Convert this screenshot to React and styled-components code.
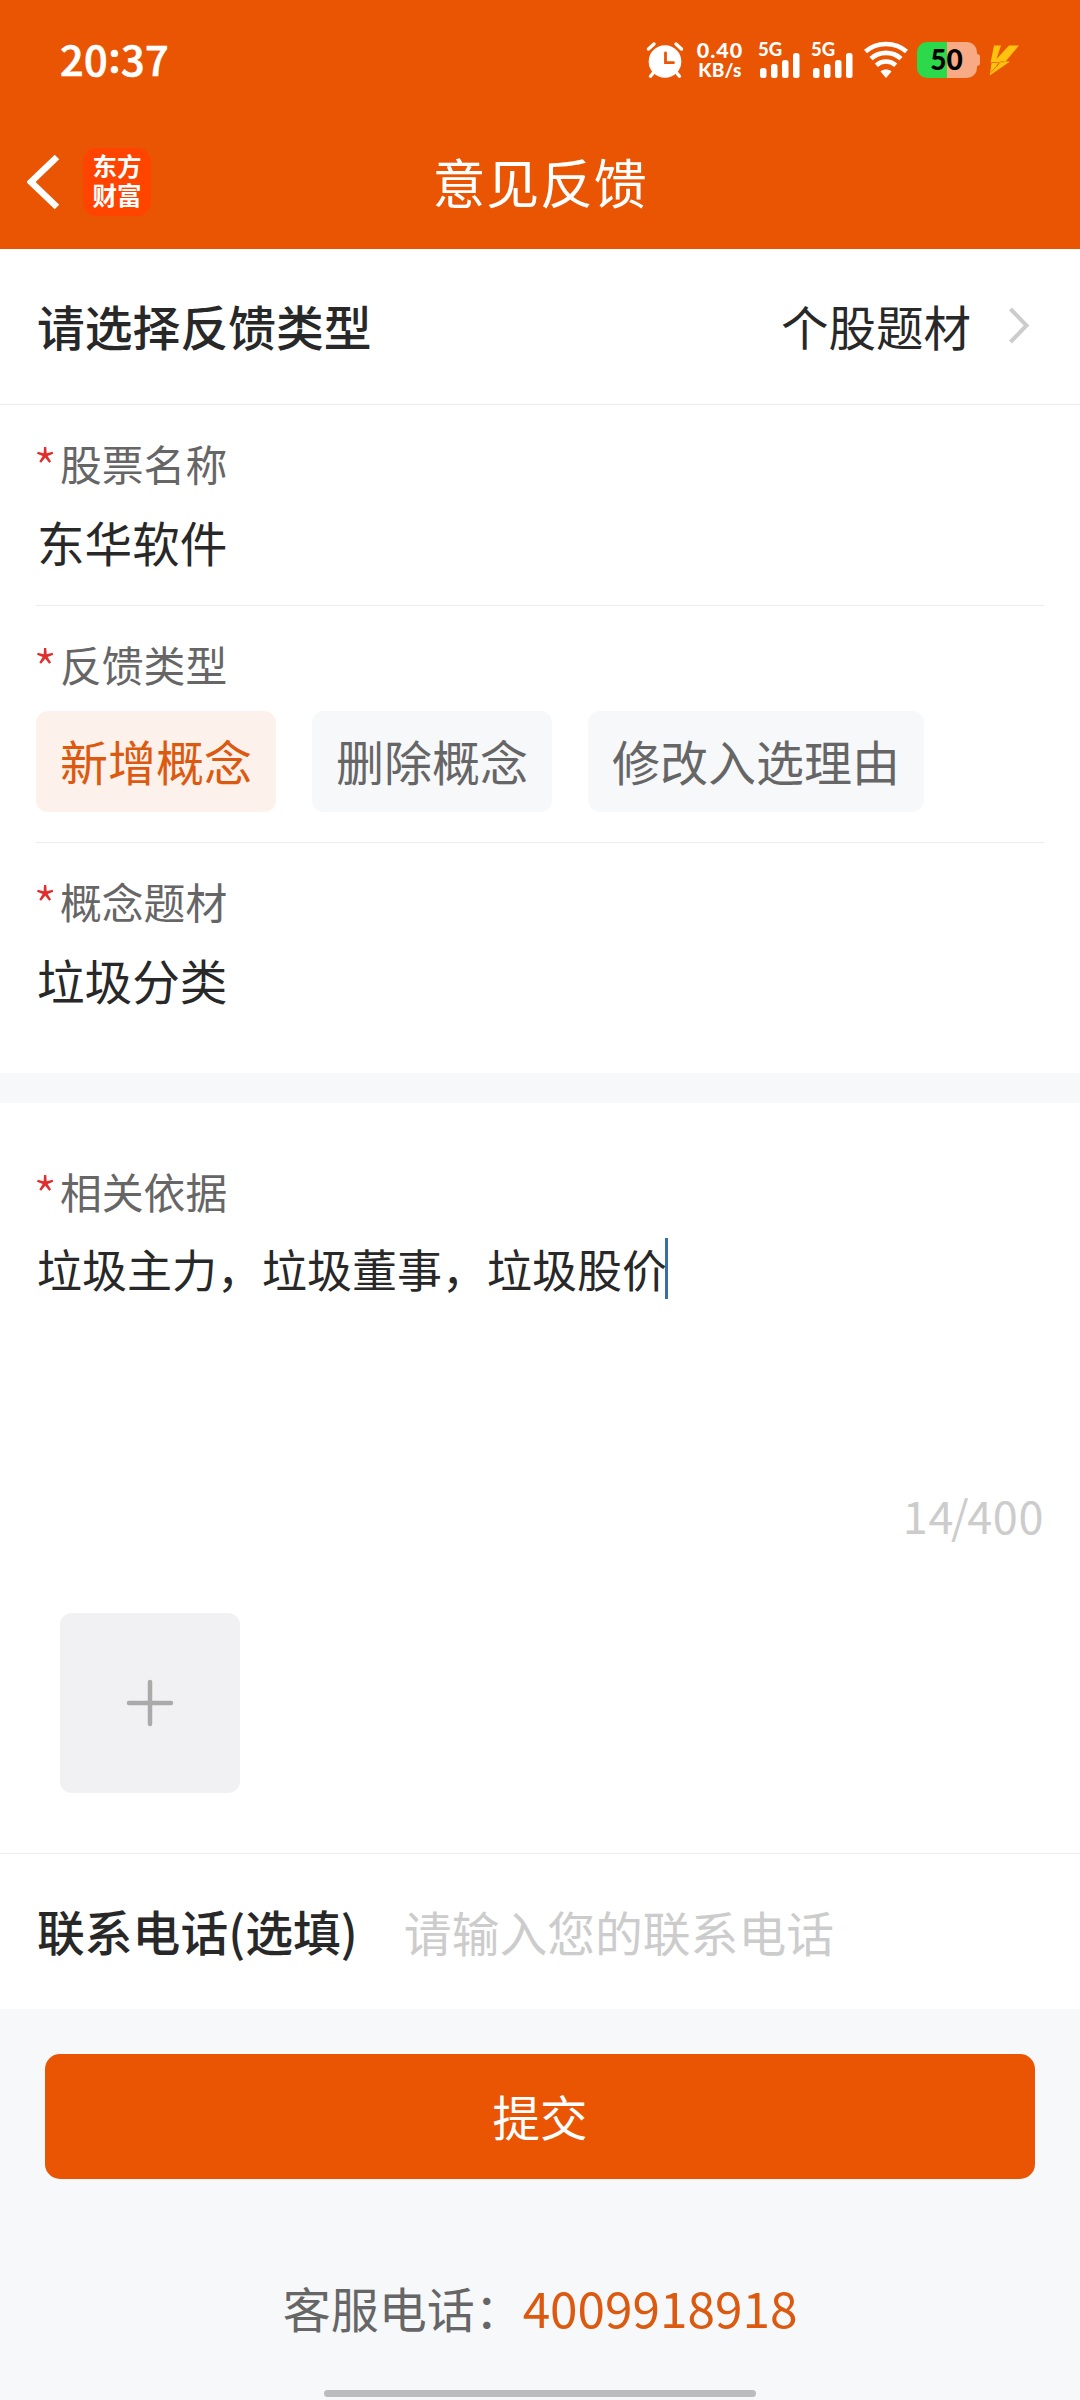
import React, { useState } from "react";
import styled, { createGlobalStyle } from "styled-components";

const GlobalStyle = createGlobalStyle`
  * {
    box-sizing: border-box;
  }

  body {
    margin: 0;
    background-color: #f7f8fa;
    font-family: "Noto Sans CJK SC", "Noto Sans", sans-serif;
    color: #282828;
  }

  button {
    font-family: inherit;
    border: none;
    padding: 0;
  }
`;

const Page = styled.div`
  width: 1080px;
  height: 2400px;
  display: flex;
  flex-direction: column;
  overflow: hidden;
  background-color: #f7f8fa;
`;

const StatusBar = styled.div`
  height: 120px;
  padding: 0 60px;
  display: flex;
  align-items: center;
  justify-content: space-between;
  background-color: #ea5504;
  color: #fff;
`;

const Clock = styled.span`
  font-size: 41.5px;
  font-weight: 500;
  letter-spacing: 0.4px;
  line-height: 60px;
  padding-bottom: 5px;
  -webkit-text-stroke: 0.7px #fff;
`;

const Colon = styled.span`
  vertical-align: 4px;
  line-height: 1;
`;

const StatusIcons = styled.div`
  display: flex;
  align-items: center;
  font-family: Lato, "Noto Sans", sans-serif;

  svg {
    display: block;
    overflow: visible;
  }
`;

const Spacer = styled.span`
  width: ${(props) => props.$width}px;
`;

const NetSpeed = styled.div`
  width: 48px;
  height: 40px;
  margin: 0 14px 0 12px;
  display: flex;
  flex-direction: column;
  align-items: center;
  font-weight: 900;
  white-space: nowrap;
`;

const SpeedLine = styled.span`
  font-size: ${(props) => props.$size}px;
  line-height: 20px;
  letter-spacing: ${(props) => props.$spacing}px;
`;

const NavBar = styled.header`
  height: 129px;
  display: grid;
  grid-template-columns: 1fr auto 1fr;
  align-items: center;
  padding: 0 27px;
  background-color: #ea5504;
  color: #fff;
`;

const NavLeft = styled.div`
  display: flex;
  align-items: center;
  gap: 23px;
  padding-bottom: 6px;
`;

const Logo = styled.div`
  width: 68px;
  height: 68px;
  padding-top: 3px;
  border-radius: 14px;
  background-color: #ff4400;
  font-size: 24.5px;
  font-weight: 700;
  line-height: 29.5px;
  text-align: center;
`;

const Title = styled.h1`
  margin: 0;
  font-size: 53px;
  font-weight: 400;
  line-height: 80px;
  letter-spacing: 0.8px;
  padding-bottom: 8px;
`;

const TypeRow = styled.div`
  height: 156px;
  padding: 0 50px 1px 37px;
  display: flex;
  align-items: center;
  background-color: #fff;
  border-bottom: 1px solid #ececec;
`;

const RowTitle = styled.span`
  font-size: 47.8px;
  font-weight: 500;
  line-height: 72px;
`;

const TypeValue = styled.span`
  margin-left: auto;
  margin-right: 37px;
  font-size: 47.5px;
  line-height: 72px;
`;

const Panel = styled.section`
  padding: 0 36px;
  background-color: #fff;
`;

const Field = styled.div`
  height: ${(props) => props.$height}px;
  padding-top: 28px;
  border-bottom: ${(props) => (props.$last ? "none" : "1px solid #ececec")};
`;

const Label = styled.div`
  height: 60px;
  display: flex;
  font-size: 41.8px;
  line-height: 60px;
  color: #666;
`;

const Star = styled.span`
  width: 27px;
  margin-left: -3px;
  font-size: 55px;
  font-weight: 300;
  line-height: 66px;
  color: #e02d2d;
`;

const Value = styled.div`
  margin-top: 19px;
  padding-left: 1px;
  font-size: 47.6px;
  line-height: 60px;
`;

const ChipRow = styled.div`
  display: flex;
  gap: 36px;
  margin-top: 17px;
`;

const Chip = styled.button`
  height: 101px;
  padding: 0 24px 3px;
  border-radius: 12px;
  font-size: 48px;
  line-height: 94px;
  color: ${(props) => (props.$active ? "#dc5a10" : "#666")};
  background-color: ${(props) => (props.$active ? "#fdf1eb" : "#f7f8fa")};
`;

const Evidence = styled.section`
  height: 751px;
  margin-top: 30px;
  padding: 58px 36px 0;
  background-color: #fff;
  border-bottom: 1px solid #ececec;
`;

const EvidenceText = styled.div`
  height: 246px;
  margin-top: 15px;
  padding-left: 1px;
  display: flex;
  align-items: flex-start;
  font-size: 45px;
  line-height: 66px;
`;

const Caret = styled.span`
  width: 3px;
  height: 61px;
  margin: 2px 0 0 -2px;
  background-color: #3a6fa5;
`;

const Counter = styled.div`
  text-align: right;
  font-size: 45px;
  line-height: 66px;
  letter-spacing: 0.6px;
  color: #ccc;
`;

const Slash = styled.span`
  margin: 0 -2px 0 -3px;
`;

const Upload = styled.button`
  width: 180px;
  height: 180px;
  margin: 65px 0 0 24px;
  display: flex;
  align-items: center;
  justify-content: center;
  border-radius: 12px;
  background-color: #f1f1f4;
`;

const PhoneRow = styled.div`
  height: 155px;
  padding: 0 36px 1px 37px;
  display: flex;
  align-items: center;
  background-color: #fff;
`;

const PhoneInput = styled.input`
  flex: 1;
  height: 72px;
  margin-left: 46px;
  padding: 0;
  border: none;
  outline: none;
  background: transparent;
  font-family: inherit;
  font-size: 47.8px;

  &::placeholder {
    color: #ccc;
  }
`;

const Submit = styled.button`
  height: 125px;
  margin: 45px 45px 0;
  padding-bottom: 2px;
  border-radius: 15px;
  background-color: #ea5504;
  color: #fff;
  font-size: 47.5px;
  line-height: 119px;
`;

const Service = styled.div`
  margin-top: 95px;
  display: flex;
  justify-content: center;
  font-size: 48px;
  line-height: 66px;
  color: #666;
`;

const ServiceNumber = styled.span`
  font-size: 49.5px;
  color: #dc5a10;
`;

const HomeBar = styled.div`
  width: 432px;
  height: 7px;
  margin: auto auto 3px;
  border-radius: 4px;
  background-color: #bbbcbe;
`;

const AlarmIcon = () => (
  <svg width="38" height="36" viewBox="0 0 38 36">
    <circle cx="19" cy="19.5" r="16.3" fill="#fff" />
    <g stroke="#fff" strokeWidth="3.4" strokeLinecap="round">
      <path d="M2.5 7 8 2M30 2l5.5 5M8 30l-3.5 4.3M30 30l3.5 4.3" />
    </g>
    <path d="M19.5 11v9.7h8" fill="none" stroke="#ea5504" strokeWidth="2.8" strokeLinecap="round" />
  </svg>
);

const SignalIcon = () => (
  <svg width="43" height="36" viewBox="0 0 43 36">
    <text x="0" y="14" fill="#fff" fontSize="18.5" fontWeight="900">5G</text>
    <g fill="#fff">
      <rect x="2" y="26" width="6.5" height="10" rx="2.5" />
      <rect x="13" y="22" width="6.5" height="14" rx="2.5" />
      <rect x="24" y="18" width="6.5" height="18" rx="2.5" />
      <rect x="35" y="11" width="6.5" height="25" rx="2.5" />
    </g>
  </svg>
);

const WifiIcon = () => (
  <svg width="44" height="36" viewBox="0 0 44 36">
    <g fill="none" stroke="#fff" strokeWidth="4.6">
      <path d="M1.5 9.5C13-.5 31-.5 42.5 9.5" />
      <path d="M7 16.6c8.5-7.6 21.5-7.6 30 0" />
      <path d="M12.3 23.2c5.6-5 13.8-5 19.4 0" />
    </g>
    <path d="M16.5 29.5c3-2.6 8-2.6 11 0L22 36z" fill="#fff" />
  </svg>
);

const BatteryIcon = () => (
  <svg width="64" height="36" viewBox="0 0 64 36">
    <path d="M10 0h20v36H10A10 10 0 0 1 0 26V10A10 10 0 0 1 10 0z" fill="#2bd94b" />
    <path d="M30 0h20a10 10 0 0 1 10 10v2q3 0 3 3v6q0 3-3 3v2a10 10 0 0 1-10 10H30z" fill="#f7aa84" />
    <text x="29.5" y="28" textAnchor="middle" fontSize="28" fontWeight="900" fill="#000">50</text>
  </svg>
);

const BoltIcon = () => (
  <svg width="31" height="31" viewBox="0 0 31 31">
    <path d="M5 .5h7L7.5 14 20 .5h10L16.500 16.500h4.500L.8 30.500 2.500 18H1.500z" fill="#ffc20e" />
    <path d="M1.500 17.500h8l-1.500 4M15.500 16.800h-4L2 27.500" fill="none" stroke="#ea5504" strokeWidth="0.7" />
  </svg>
);

const chips = ["新增概念", "删除概念", "修改入选理由"];

function RequiredLabel({ children }) {
  return (
    <Label>
      <Star>*</Star>
      {children}
    </Label>
  );
}

function App() {
  const [active, setActive] = useState("新增概念");
  const [phone, setPhone] = useState("");

  return (
    <Page>
      <GlobalStyle />
      <StatusBar>
        <Clock>
          20<Colon>:</Colon>37
        </Clock>
        <StatusIcons>
          <AlarmIcon />
          <NetSpeed>
            <SpeedLine $size={21.5} $spacing={1}>0.40</SpeedLine>
            <SpeedLine $size={19} $spacing={0.3}>KB/s</SpeedLine>
          </NetSpeed>
          <SignalIcon />
          <Spacer $width={10} />
          <SignalIcon />
          <Spacer $width={10} />
          <WifiIcon />
          <Spacer $width={9} />
          <BatteryIcon />
          <Spacer $width={8} />
          <BoltIcon />
        </StatusIcons>
      </StatusBar>

      <NavBar>
        <NavLeft>
          <svg width="33" height="56" viewBox="0 0 33 56">
            <path d="M30 3 4 28l26 25" fill="none" stroke="#fff" strokeWidth="6.5" />
          </svg>
          <Logo>
            东方
            <br />
            财富
          </Logo>
        </NavLeft>
        <Title>意见反馈</Title>
      </NavBar>

      <TypeRow>
        <RowTitle>请选择反馈类型</RowTitle>
        <TypeValue>个股题材</TypeValue>
        <svg width="22" height="38" viewBox="0 0 22 38">
          <path d="M2.5 2 18.5 18.500l-16 16.500" fill="none" stroke="#ccc" strokeWidth="4" />
        </svg>
      </TypeRow>

      <Panel>
        <Field $height={201}>
          <RequiredLabel>股票名称</RequiredLabel>
          <Value>东华软件</Value>
        </Field>
        <Field $height={237}>
          <RequiredLabel>反馈类型</RequiredLabel>
          <ChipRow>
            {chips.map((chip) => (
              <Chip key={chip} $active={chip === active} onClick={() => setActive(chip)}>
                {chip}
              </Chip>
            ))}
          </ChipRow>
        </Field>
        <Field $height={230} $last>
          <RequiredLabel>概念题材</RequiredLabel>
          <Value>垃圾分类</Value>
        </Field>
      </Panel>

      <Evidence>
        <RequiredLabel>相关依据</RequiredLabel>
        <EvidenceText>
          垃圾主力，垃圾董事，垃圾股价
          <Caret />
        </EvidenceText>
        <Counter>
          14<Slash>/</Slash>400
        </Counter>
        <Upload>
          <svg width="48" height="48" viewBox="0 0 48 48">
            <path d="M24 3v42M3 24h42" stroke="#aaa" strokeWidth="4.5" strokeLinecap="round" />
          </svg>
        </Upload>
      </Evidence>

      <PhoneRow>
        <RowTitle>联系电话(选填)</RowTitle>
        <PhoneInput
          placeholder="请输入您的联系电话"
          value={phone}
          onChange={(e) => setPhone(e.target.value)}
        />
      </PhoneRow>

      <Submit>提交</Submit>

      <Service>
        客服电话：
        <ServiceNumber>4009918918</ServiceNumber>
      </Service>

      <HomeBar />
    </Page>
  );
}

export default App;
